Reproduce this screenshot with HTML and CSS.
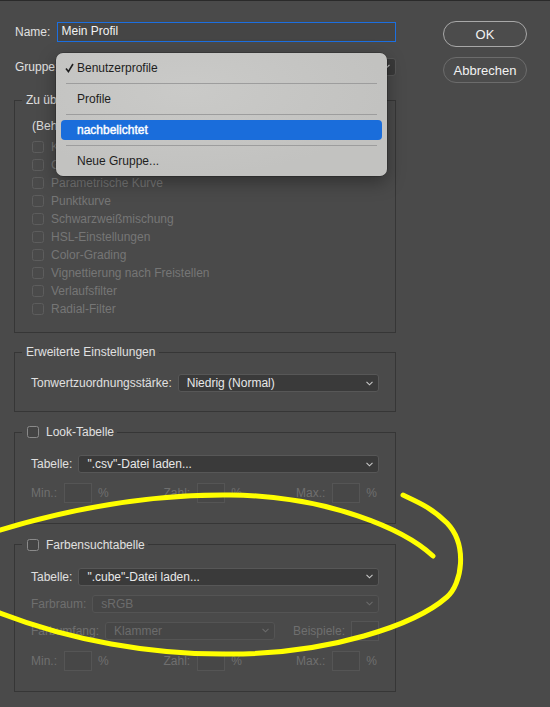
FILE: index.html
```html
<!DOCTYPE html>
<html lang="de">
<head>
<meta charset="utf-8">
<title>Neues Profil</title>
<link rel="stylesheet" href="styles.css">
</head>
<body>
<div class="dialog">
  <div class="main">
    <div class="row name-row">
      <span class="lbl">Name:</span>
      <div class="text-input">Mein Profil</div>
    </div>
    <div class="row group-row">
      <span class="lbl">Gruppe:</span>
      <div class="select group-select"><span>Benutzerprofile</span><svg class="chev" viewBox="0 0 7 5"><path d="M0.5 0.8 L3.5 3.8 L6.5 0.8"/></svg></div>
    </div>

    <fieldset class="fs fs-settings">
      <legend>Zu übernehmende Einstellungen</legend>
      <p class="hint">(Behandlung und Profil sind immer aktiviert)</p>
      <ul class="checks">
        <li><span class="cb"></span>Kalibrierung</li>
        <li><span class="cb"></span>Grundeinstellungen</li>
        <li><span class="cb"></span>Parametrische Kurve</li>
        <li><span class="cb"></span>Punktkurve</li>
        <li><span class="cb"></span>Schwarzweißmischung</li>
        <li><span class="cb"></span>HSL-Einstellungen</li>
        <li><span class="cb"></span>Color-Grading</li>
        <li><span class="cb"></span>Vignettierung nach Freistellen</li>
        <li><span class="cb"></span>Verlaufsfilter</li>
        <li><span class="cb"></span>Radial-Filter</li>
      </ul>
    </fieldset>

    <fieldset class="fs fs-advanced">
      <legend>Erweiterte Einstellungen</legend>
      <div class="field-row">
        <span>Tonwertzuordnungsstärke:</span>
        <div class="select"><span>Niedrig (Normal)</span><svg class="chev" viewBox="0 0 7 5"><path d="M0.5 0.8 L3.5 3.8 L6.5 0.8"/></svg></div>
      </div>
    </fieldset>

    <fieldset class="fs fs-look">
      <legend class="cb-legend"><span class="cb cb-on"></span>Look-Tabelle</legend>
      <div class="field-row">
        <span>Tabelle:</span>
        <div class="select"><span>".csv"-Datei laden...</span><svg class="chev" viewBox="0 0 7 5"><path d="M0.5 0.8 L3.5 3.8 L6.5 0.8"/></svg></div>
      </div>
      <div class="num-row">
        <div class="num-group"><span>Min.:</span><span class="box"></span><span>%</span></div>
        <div class="num-group"><span>Zahl:</span><span class="box"></span><span>%</span></div>
        <div class="num-group"><span>Max.:</span><span class="box"></span><span>%</span></div>
      </div>
    </fieldset>

    <fieldset class="fs fs-cube">
      <legend class="cb-legend"><span class="cb cb-on"></span>Farbensuchtabelle</legend>
      <div class="field-row">
        <span>Tabelle:</span>
        <div class="select"><span>".cube"-Datei laden...</span><svg class="chev" viewBox="0 0 7 5"><path d="M0.5 0.8 L3.5 3.8 L6.5 0.8"/></svg></div>
      </div>
      <div class="field-row disabled row-space">
        <span>Farbraum:</span>
        <div class="select"><span>sRGB</span><svg class="chev" viewBox="0 0 7 5"><path d="M0.5 0.8 L3.5 3.8 L6.5 0.8"/></svg></div>
      </div>
      <div class="field-row disabled row-gamut">
        <span>Farbumfang:</span>
        <div class="select gamut-select"><span>Klammer</span><svg class="chev" viewBox="0 0 7 5"><path d="M0.5 0.8 L3.5 3.8 L6.5 0.8"/></svg></div>
        <span class="samples">Beispiele:</span>
        <span class="box"></span>
      </div>
      <div class="num-row">
        <div class="num-group"><span>Min.:</span><span class="box"></span><span>%</span></div>
        <div class="num-group"><span>Zahl:</span><span class="box"></span><span>%</span></div>
        <div class="num-group"><span>Max.:</span><span class="box"></span><span>%</span></div>
      </div>
    </fieldset>
  </div>

  <div class="buttons">
    <button class="btn btn-ok">OK</button>
    <button class="btn btn-cancel">Abbrechen</button>
  </div>

  <div class="popup">
    <div class="pitem"><svg class="check" viewBox="0 0 9 10"><path d="M1 5.6 L3.4 8.6 L8 1"/></svg>Benutzerprofile</div>
    <div class="psep"></div>
    <div class="pitem">Profile</div>
    <div class="psep"></div>
    <div class="pitem active">nachbelichtet</div>
    <div class="psep"></div>
    <div class="pitem">Neue Gruppe...</div>
  </div>
</div>

<svg class="annotation" viewBox="0 0 550 707" width="550" height="707">
  <path d="M433 556 C405 530 330 496 230 495 C140 494 60 512 0 530 C-45 545 -45 600 0 613 C70 640 150 655 230 654 C330 654 415 625 447 597 C462 584 468 545 447 523 C432 508 420 503 403 495"/>
</svg>
</body>
</html>
```

FILE: styles.css
```css
* { box-sizing: border-box; }

html, body { margin: 0; }

body {
  width: 550px;
  height: 707px;
  overflow: hidden;
  background: #4a4a4a;
  border-top: 1px solid #2a2a2a;
  font-family: "Liberation Sans", Arial, sans-serif;
  font-size: 12px;
  color: #e0e0e0;
}

.dialog {
  position: relative;
  display: flex;
  gap: 47px;
  padding: 20px 0 0 14px;
}

.main {
  width: 382px;
  display: flex;
  flex-direction: column;
}

.row { display: flex; align-items: center; }

.lbl { width: 43px; padding-left: 1px; flex: none; }

.name-row { margin-top: 1px; height: 20px; }

.text-input {
  flex: 1;
  height: 20px;
  border: 1.5px solid #1c6fe0;
  background: #454545;
  padding-left: 3.5px;
  line-height: 17px;
  color: #f2f2f2;
}

.group-row { margin-top: 16px; height: 17px; }

.group-select { flex: none; width: 337px; height: 17px; }

/* fieldsets */
.fs {
  margin: 12px 0 0;
  padding: 0 16px;
  border: 1px solid #363636;
  min-width: 0;
}

.fs legend {
  padding: 0 4px;
  margin-left: -9px;
  line-height: 16px;
  color: #e0e0e0;
}

.fs-settings { margin-top: 17px; padding: 0 16px 14px 17px; }
.fs-settings legend { margin-left: -10px; }

.hint { margin: 9px 0 3px; line-height: 18px; color: #dcdcdc; }

.checks { list-style: none; margin: 0; padding: 0; }
.checks li {
  display: flex;
  align-items: center;
  gap: 7px;
  height: 18px;
  color: #767676;
}

.cb {
  flex: none;
  width: 12px;
  height: 12px;
  border: 1px solid #5d5d5d;
  border-radius: 2.5px;
}

.cb-legend {
  display: flex;
  align-items: center;
  gap: 7px;
}
.fs .cb-legend { padding: 0 3px 0 5px; }
.cb-on { border-color: #8a8a8a; background: #444; }

.fs-advanced { margin-top: 11px; padding-top: 14px; padding-bottom: 19px; }
.fs-look { padding-top: 15px; padding-bottom: 20px; }
.fs-cube { margin-top: 12.5px; padding-top: 15px; padding-bottom: 20px; }

.field-row {
  display: flex;
  align-items: center;
  gap: 6px;
  height: 18px;
  white-space: nowrap;
}

.select {
  flex: 1;
  height: 18px;
  display: flex;
  align-items: center;
  justify-content: space-between;
  padding: 0 5px 0 8px;
  background: #3a3a3a;
  border: 1px solid #575757;
  border-radius: 3px;
  color: #e8e8e8;
}

.chev {
  width: 7px;
  height: 5px;
  fill: none;
  stroke: #c8c8c8;
  stroke-width: 1.1;
}

.disabled { color: #6f6f6f; }
.disabled .select {
  background: #464646;
  border-color: #545454;
  color: #6c6c6c;
}
.disabled .chev { stroke: #6a6a6a; }

.row-space { margin-top: 9px; }
.row-gamut { margin-top: 8px; height: 20px; }
.gamut-select { flex: none; width: 170px; }
.samples { margin-left: auto; }

.box {
  flex: none;
  width: 28px;
  height: 20px;
  background: #474747;
  border: 1px solid #555;
}

.num-row {
  display: grid;
  grid-template-columns: repeat(3, 132.5px);
  height: 20px;
  margin-top: 10px;
  color: #6f6f6f;
}

.num-group { display: flex; align-items: center; }
.num-group .box { margin: 0 6px 0 7px; }

/* buttons */
.buttons {
  display: flex;
  flex-direction: column;
  gap: 10px;
}

.btn {
  width: 84px;
  height: 26px;
  border-radius: 13px;
  background: #4c4c4c;
  color: #f2f2f2;
  font-family: "Liberation Sans", Arial, sans-serif;
  font-size: 13px;
  padding: 0;
}
.btn-ok { border: 1.5px solid #a8a8a8; }
.btn-cancel { border: 1.5px solid #6c6c6c; }

/* popup menu */
.popup {
  position: absolute;
  left: 56px;
  top: 52px;
  width: 331px;
  height: 123px;
  padding: 5px;
  background: radial-gradient(ellipse at 40% 30%, #cacac8 0%, #c2c2c0 70%);
  border-radius: 7px;
  box-shadow: 0 0 0 0.5px rgba(0,0,0,0.35), 0 6px 18px rgba(0,0,0,0.35);
  color: #1e1e1e;
}

.pitem {
  position: relative;
  height: 20px;
  display: flex;
  align-items: center;
  padding-left: 16px;
}

.pitem.active {
  background: #1a6ddb;
  color: #fff;
  border-radius: 4px;
  -webkit-text-stroke: 0.4px #fff;
}

.check {
  position: absolute;
  left: 4px;
  top: 5px;
  width: 9px;
  height: 10px;
  fill: none;
  stroke: #1e1e1e;
  stroke-width: 1.6;
}

.psep { height: 1px; margin: 5px; background: #9d9d9d; }

/* hand-drawn highlight */
.annotation {
  position: absolute;
  left: 0;
  top: 0;
  pointer-events: none;
}
.annotation path {
  fill: none;
  stroke: #ffff00;
  stroke-width: 5;
  stroke-linecap: round;
  stroke-linejoin: round;
}
```
